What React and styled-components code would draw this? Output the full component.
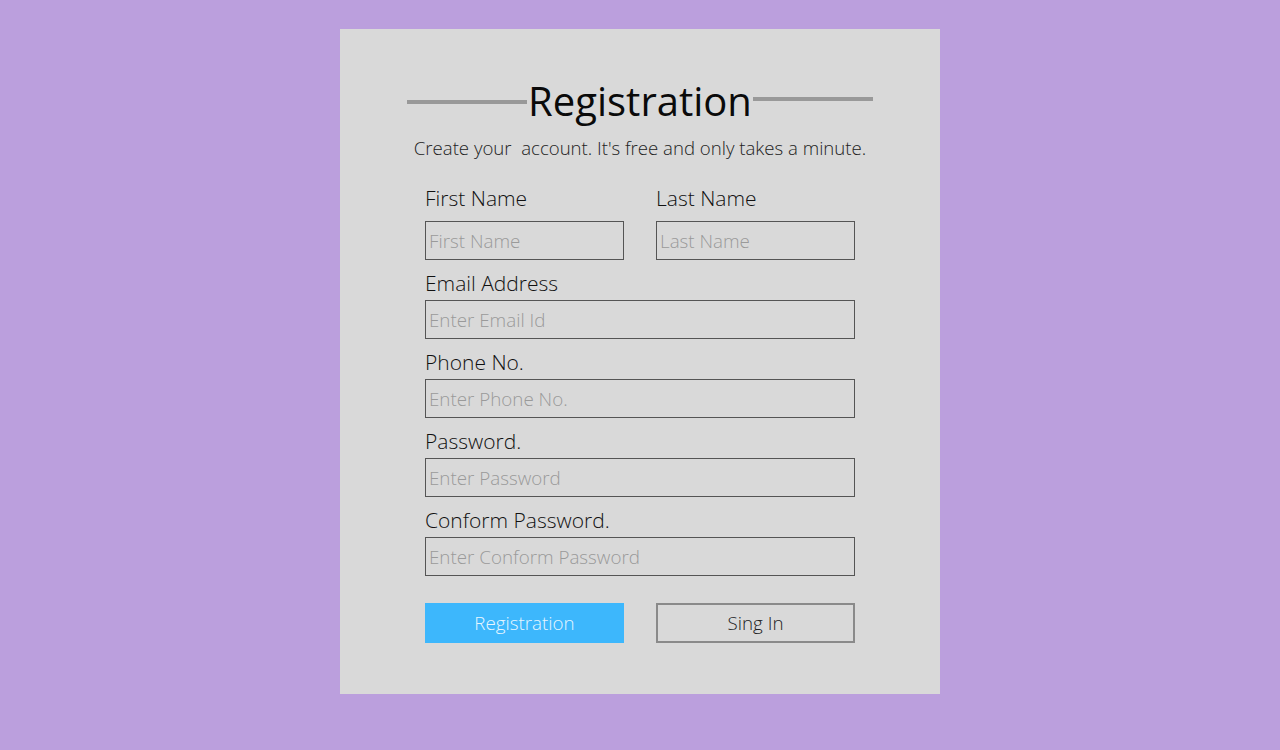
import styled, { createGlobalStyle } from 'styled-components'

const GlobalStyle = createGlobalStyle`
  html, body {
    margin: 0;
    padding: 0;
    background: #bb9fdd;
    font-family: "Open Sans", "Liberation Sans", sans-serif;
  }
`

const Page = styled.div`
  min-height: 750px;
  display: flex;
  justify-content: center;
  align-items: flex-start;
  padding-top: 29px;
  box-sizing: border-box;
`

const Card = styled.div`
  width: 600px;
  height: 665px;
  background: #d9d9d9;
  display: flex;
  flex-direction: column;
  align-items: center;
  box-sizing: border-box;
  padding-top: 47px;
`

const TitleRow = styled.div`
  display: flex;
  align-items: center;
  width: 466px;
`

const Line = styled.span`
  flex: 1;
  height: 4px;
  background: #999;
  transform: translateY(${p => p.$shift}px);
`

const Title = styled.h1`
  margin: 0;
  font-size: 40px;
  font-weight: 400;
  line-height: 50px;
  color: #0a0a0a;
  padding: 0 1px;
`

const Subtitle = styled.p`
  margin: 10px 0 0;
  font-size: 18.6px;
  line-height: 24px;
  font-weight: 300;
  color: #222;
  white-space: pre;
`

const Form = styled.form`
  width: 430px;
  margin-top: 21px;
  display: flex;
  flex-direction: column;
`

const Row = styled.div`
  display: grid;
  grid-template-columns: 199px 199px;
  column-gap: 32px;
`

const Field = styled.div`
  display: flex;
  flex-direction: column;
`

const Label = styled.label`
  box-sizing: border-box;
  height: 40px;
  display: flex;
  align-items: flex-end;
  padding-bottom: ${p => (p.$first ? 12 : 6)}px;
  font-size: 21px;
  line-height: 21px;
  font-weight: 300;
  color: #111;
`

const Input = styled.input`
  box-sizing: border-box;
  width: 100%;
  height: 39px;
  margin: 0;
  border: 1.5px solid #555;
  background: transparent;
  padding: 0 3px;
  font-family: inherit;
  font-size: 18.8px;
  font-weight: 300;
  color: #222;
  outline: none;
  &::placeholder {
    color: #9a9a9a;
  }
`

const Buttons = styled.div`
  display: grid;
  grid-template-columns: 199px 199px;
  column-gap: 32px;
  margin-top: 27px;
`

const Button = styled.button`
  box-sizing: border-box;
  height: 40px;
  font-family: inherit;
  font-size: 18.8px;
  font-weight: 300;
  cursor: pointer;
  background: ${p => (p.$primary ? '#3db7fc' : 'transparent')};
  color: ${p => (p.$primary ? '#e6f6ff' : '#222')};
  border: ${p => (p.$primary ? 'none' : '2px solid #8a8a8a')};
`

export default function App() {
  return (
    <>
      <GlobalStyle />
      <Page>
        <Card>
          <TitleRow>
            <Line $shift={1} />
            <Title>Registration</Title>
            <Line $shift={-2} />
          </TitleRow>
          <Subtitle>Create your  account. It's free and only takes a minute.</Subtitle>
          <Form onSubmit={e => e.preventDefault()}>
            <Row>
              <Field>
                <Label $first>First Name</Label>
                <Input placeholder="First Name" />
              </Field>
              <Field>
                <Label $first>Last Name</Label>
                <Input placeholder="Last Name" />
              </Field>
            </Row>
            <Field>
              <Label>Email Address</Label>
              <Input placeholder="Enter Email Id" />
            </Field>
            <Field>
              <Label>Phone No.</Label>
              <Input placeholder="Enter Phone No." />
            </Field>
            <Field>
              <Label>Password.</Label>
              <Input type="password" placeholder="Enter Password" />
            </Field>
            <Field>
              <Label>Conform Password.</Label>
              <Input type="password" placeholder="Enter Conform Password" />
            </Field>
            <Buttons>
              <Button $primary type="submit">Registration</Button>
              <Button type="button">Sing In</Button>
            </Buttons>
          </Form>
        </Card>
      </Page>
    </>
  )
}
